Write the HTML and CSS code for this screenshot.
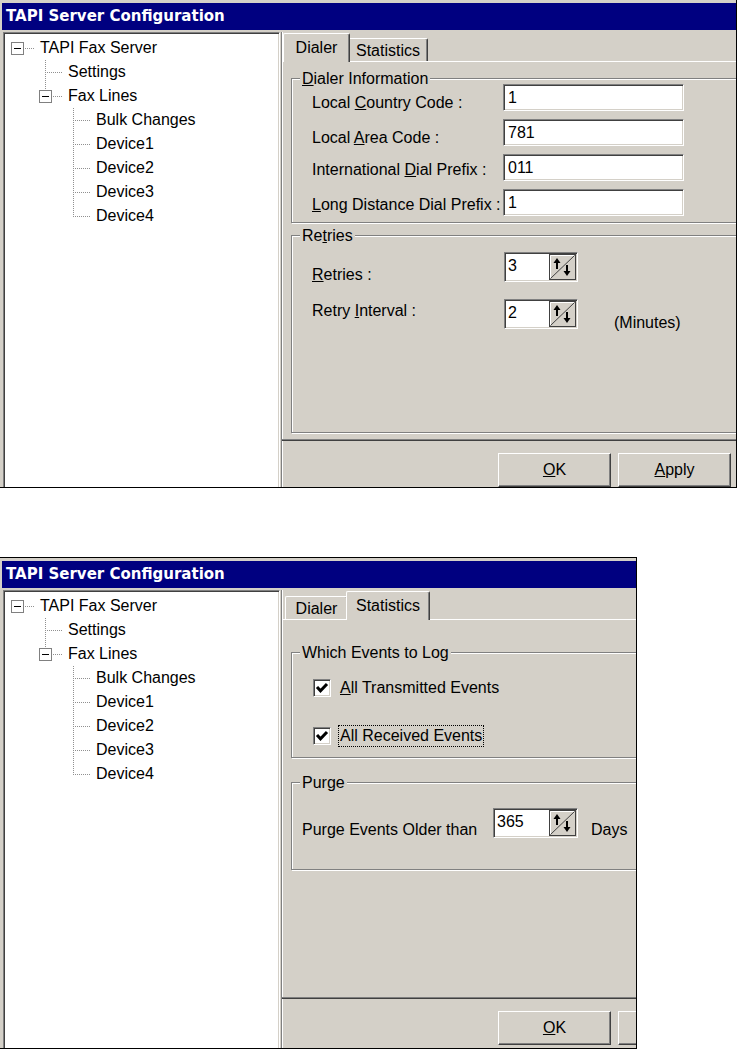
FILE: index.html
```html
<!DOCTYPE html>
<html lang="en">
<head>
    <meta charset="UTF-8">
    <meta name="viewport" content="width=device-width, initial-scale=1.0">
    <title>TAPI Server Configuration</title>

    <link rel="stylesheet" href="styles.css">
</head>
<body>

    <!-- Screenshot 1: Dialer tab -->
    <div class="shot shot-dialer">
        <div class="window">
            <div class="titlebar">TAPI Server Configuration</div>
            <div class="client">
                <ul class="tree">
                    <li class="node root"><span class="gutter"><span class="toggle"></span></span>TAPI Fax Server</li>
                    <li class="node lvl1"><span class="gutter"></span>Settings</li>
                    <li class="node lvl1 last"><span class="gutter"><span class="toggle"></span></span>Fax Lines</li>
                    <li class="node lvl2"><span class="gutter"></span>Bulk Changes</li>
                    <li class="node lvl2"><span class="gutter"></span>Device1</li>
                    <li class="node lvl2"><span class="gutter"></span>Device2</li>
                    <li class="node lvl2"><span class="gutter"></span>Device3</li>
                    <li class="node lvl2 last"><span class="gutter"></span>Device4</li>
                </ul>

                <div class="panel">
                    <div class="tabs">
                        <div class="tab tab-dialer active">Dialer</div>
                        <div class="tab tab-stats">Statistics</div>
                    </div>

                    <div class="page page-dialer">
                        <div class="group">
                            <div class="group-title"><u>D</u>ialer Information</div>
                            <div class="field-grid">
                                <label class="lbl-low">Local <u>C</u>ountry Code :</label>
                                <div class="edit">1</div>
                                <label class="lbl-low">Local <u>A</u>rea Code :</label>
                                <div class="edit">781</div>
                                <label>International <u>D</u>ial Prefix :</label>
                                <div class="edit">011</div>
                                <label><u>L</u>ong Distance Dial Prefix :</label>
                                <div class="edit">1</div>
                            </div>
                        </div>

                        <div class="group group-fill">
                            <div class="group-title">Re<u>t</u>ries</div>
                            <div class="spin-grid">
                                <label class="lbl-retries"><u>R</u>etries :</label>
                                <div class="spin spin-short">
                                    <span class="spin-value">3</span>
                                    <svg class="spin-btn" width="27" height="26" viewBox="0 0 27 26">
                                        <rect x="0.5" y="0.5" width="26" height="25" fill="#d4d0c8" stroke="#404040"/>
                                        <path d="M1.5 24V1.5H25" fill="none" stroke="#fff"/>
                                        <path d="M1.5 24.5L25.5 1.5" fill="none" stroke="#404040"/>
                                        <path d="M8 15V7" stroke="#000" stroke-width="2"/>
                                        <path d="M4.5 9L8 4L11.5 9Z" fill="#000"/>
                                        <path d="M18 11V19" stroke="#000" stroke-width="2"/>
                                        <path d="M14.5 17L18 22L21.5 17Z" fill="#000"/>
                                    </svg>
                                </div>
                                <span></span>

                                <label class="lbl-interval">Retry <u>I</u>nterval :</label>
                                <div class="spin spin-short">
                                    <span class="spin-value">2</span>
                                    <svg class="spin-btn" width="27" height="26" viewBox="0 0 27 26">
                                        <rect x="0.5" y="0.5" width="26" height="25" fill="#d4d0c8" stroke="#404040"/>
                                        <path d="M1.5 24V1.5H25" fill="none" stroke="#fff"/>
                                        <path d="M1.5 24.5L25.5 1.5" fill="none" stroke="#404040"/>
                                        <path d="M8 15V7" stroke="#000" stroke-width="2"/>
                                        <path d="M4.5 9L8 4L11.5 9Z" fill="#000"/>
                                        <path d="M18 11V19" stroke="#000" stroke-width="2"/>
                                        <path d="M14.5 17L18 22L21.5 17Z" fill="#000"/>
                                    </svg>
                                </div>
                                <span class="unit">(Minutes)</span>
                            </div>
                        </div>
                    </div>

                    <div class="buttons">
                        <button class="btn"><u>O</u>K</button>
                        <button class="btn"><u>A</u>pply</button>
                    </div>
                </div>
            </div>
        </div>
    </div>

    <!-- Screenshot 2: Statistics tab -->
    <div class="shot shot-stats">
        <div class="window">
            <div class="titlebar">TAPI Server Configuration</div>
            <div class="client">
                <ul class="tree">
                    <li class="node root"><span class="gutter"><span class="toggle"></span></span>TAPI Fax Server</li>
                    <li class="node lvl1"><span class="gutter"></span>Settings</li>
                    <li class="node lvl1 last"><span class="gutter"><span class="toggle"></span></span>Fax Lines</li>
                    <li class="node lvl2"><span class="gutter"></span>Bulk Changes</li>
                    <li class="node lvl2"><span class="gutter"></span>Device1</li>
                    <li class="node lvl2"><span class="gutter"></span>Device2</li>
                    <li class="node lvl2"><span class="gutter"></span>Device3</li>
                    <li class="node lvl2 last"><span class="gutter"></span>Device4</li>
                </ul>

                <div class="panel">
                    <div class="tabs">
                        <div class="tab tab-dialer">Dialer</div>
                        <div class="tab tab-stats active">Statistics</div>
                    </div>

                    <div class="page page-stats">
                        <div class="group">
                            <div class="group-title">Which Events to Log</div>
                            <div class="check-list">
                                <div class="check-row">
                                    <span class="checkbox">
                                        <svg width="14" height="14" viewBox="0 0 14 14"><path d="M2 6L5.5 9.8L12 3" fill="none" stroke="#000" stroke-width="3"/></svg>
                                    </span>
                                    <span class="check-label"><u>A</u>ll Transmitted Events</span>
                                </div>
                                <div class="check-row">
                                    <span class="checkbox">
                                        <svg width="14" height="14" viewBox="0 0 14 14"><path d="M2 6L5.5 9.8L12 3" fill="none" stroke="#000" stroke-width="3"/></svg>
                                    </span>
                                    <span class="check-label focused">All Received Events</span>
                                </div>
                            </div>
                        </div>

                        <div class="group group-purge">
                            <div class="group-title">Purge</div>
                            <div class="purge-row">
                                <span class="purge-label">Purge Events Older than</span>
                                <div class="spin spin-long">
                                    <span class="spin-value">365</span>
                                    <svg class="spin-btn" width="27" height="26" viewBox="0 0 27 26">
                                        <rect x="0.5" y="0.5" width="26" height="25" fill="#d4d0c8" stroke="#404040"/>
                                        <path d="M1.5 24V1.5H25" fill="none" stroke="#fff"/>
                                        <path d="M1.5 24.5L25.5 1.5" fill="none" stroke="#404040"/>
                                        <path d="M8 15V7" stroke="#000" stroke-width="2"/>
                                        <path d="M4.5 9L8 4L11.5 9Z" fill="#000"/>
                                        <path d="M18 11V19" stroke="#000" stroke-width="2"/>
                                        <path d="M14.5 17L18 22L21.5 17Z" fill="#000"/>
                                    </svg>
                                </div>
                                <span class="days">Days</span>
                            </div>
                        </div>
                    </div>

                    <!-- second button is cut off by the screenshot edge -->
                    <div class="buttons">
                        <button class="btn"><u>O</u>K</button>
                        <button class="btn" aria-label="Apply"></button>
                    </div>
                </div>
            </div>
        </div>
    </div>

</body>
</html>
```

FILE: styles.css
```css
/* Two cropped screenshots of the same Win2000-style dialog */
* {
    box-sizing: border-box;
}

body {
    margin: 0;
    background-color: #fff;
    font-family: "Liberation Sans", Arial, sans-serif;
    font-size: 16px;
    color: #000;
}

.shot {
    overflow: hidden;
    background-color: #d4d0c8;
    border: 1px solid #000;
    border-left: 0;
}

.shot-dialer {
    width: 737px;
    height: 489px;
    margin-top: -1px;
}

.shot-stats {
    width: 637px;
    height: 492px;
    margin-top: 69px;
}

.window {
    width: 800px;
    padding: 3px 0 0 2px;
}

.titlebar {
    height: 27px;
    padding-left: 4px;
    background-color: #000080;
    color: #fff;
    font-family: "DejaVu Sans", Verdana, sans-serif;
    font-weight: bold;
    font-size: 15px;
    line-height: 27px;
    white-space: nowrap;
}

.client {
    display: flex;
    height: 460px;
    margin-top: 2px;
}

/* Tree view */
.tree {
    flex: none;
    width: 277px;
    margin: 0 0 0 1px;
    padding: 3px 0 0 1px;
    list-style: none;
    background-color: #fff;
    border: 1px solid;
    border-color: #808080 #fff #fff #808080;
    box-shadow: inset 1px 1px #404040, inset -1px -1px #d4d0c8;
}

.node {
    display: flex;
    align-items: center;
    height: 24px;
    white-space: nowrap;
}

.lvl1 {
    padding-left: 28px;
}

.lvl2 {
    padding-left: 56px;
}

.gutter {
    flex: none;
    display: flex;
    align-items: center;
    width: 30px;
    height: 24px;
    margin-right: 5px;
    background:
        repeating-linear-gradient(to right, #909090 0 1px, transparent 1px 2px) 12px 12px / 18px 1px no-repeat,
        repeating-linear-gradient(to bottom, #909090 0 1px, transparent 1px 2px) 12px 0 / 1px 24px no-repeat;
}

.last .gutter {
    background-size: 18px 1px, 1px 12px;
}

.root .gutter {
    background-size: 18px 1px, 0 0;
}

.toggle {
    width: 13px;
    height: 13px;
    margin-left: 6px;
    border: 1px solid #808080;
    background: #fff linear-gradient(#000, #000) center / 7px 1px no-repeat;
}

/* Right side: tabs and buttons */
.panel {
    flex: 1;
    margin-left: 1px;
    border-left: 1px solid #808080;
    box-shadow: inset 1px 0 #fff;
}

.tabs {
    display: flex;
    align-items: flex-end;
    height: 29px;
    padding-left: 3px;
}

.tab {
    height: 23px;
    padding-top: 1px;
    border: 1px solid;
    border-color: #fff #404040 transparent #fff;
    border-bottom: 0;
    border-radius: 2px 2px 0 0;
    box-shadow: inset -1px 0 #808080;
    text-align: center;
    line-height: 22px;
    white-space: nowrap;
}

.tab-dialer {
    width: 63px;
}

.tab-stats {
    width: 80px;
}

.tab.active {
    position: relative;
    z-index: 1;
    height: 29px;
    margin: 0 -2px -1px;
    padding-top: 0;
    background-color: #d4d0c8;
    line-height: 28px;
}

.tab-dialer.active {
    width: 67px;
}

.tab-stats.active {
    width: 84px;
}

.page {
    display: flex;
    flex-direction: column;
    height: 380px;
    padding: 16px 0 7px;
    border-top: 1px solid #fff;
    border-bottom: 1px solid #404040;
    box-shadow: inset 0 -1px #808080;
}

.page-stats {
    padding-top: 32px;
}

.group {
    margin-left: 9px;
    border: 1px solid #808080;
    box-shadow: inset 1px 1px #fff, 1px 1px #fff;
}

.group-title {
    width: fit-content;
    margin: -9px 0 0 8px;
    padding: 0 2px;
    line-height: 17px;
    background-color: #d4d0c8;
    white-space: nowrap;
}

.group-fill {
    flex: 1;
    margin-top: 12px;
}

.field-grid {
    display: grid;
    grid-template-columns: 191px 181px;
    grid-auto-rows: 27px;
    row-gap: 8px;
    margin-top: -3px;
    padding: 0 0 6px 20px;
}

.field-grid label {
    padding-top: 5px;
    line-height: 22px;
    white-space: nowrap;
}

.field-grid .lbl-low {
    padding-top: 8px;
}

.edit {
    padding-left: 4px;
    background-color: #fff;
    border: 1px solid;
    border-color: #808080 #fff #fff #808080;
    box-shadow: inset 1px 1px #404040, inset -1px -1px #d4d0c8;
    line-height: 25px;
}

.spin-grid {
    display: grid;
    grid-template-columns: 192px auto 1fr;
    grid-auto-rows: 30px;
    row-gap: 17px;
    margin-top: 8px;
    padding-left: 20px;
}

.spin-grid label,
.unit {
    line-height: 18px;
    white-space: nowrap;
}

.lbl-retries {
    padding-top: 14px;
}

.lbl-interval {
    padding-top: 3px;
}

.unit {
    margin-left: 36px;
    padding-top: 15px;
}

.spin {
    display: flex;
    height: 30px;
    padding: 1px;
    border: 1px solid;
    border-color: #808080 #fff #fff #808080;
    box-shadow: inset 1px 1px #404040, inset -1px -1px #d4d0c8;
}

.spin-short {
    width: 74px;
}

.spin-long {
    width: 85px;
}

.spin-value {
    flex: 1;
    padding-left: 2px;
    background-color: #fff;
    line-height: 24px;
}

.spin-btn {
    display: block;
    flex: none;
}

/* Statistics tab */
.check-list {
    display: flex;
    flex-direction: column;
    gap: 26px;
    padding: 16px 0 10px 21px;
}

.check-row {
    display: flex;
    align-items: center;
    height: 22px;
}

.checkbox {
    display: flex;
    align-items: center;
    justify-content: center;
    width: 18px;
    height: 18px;
    margin-right: 7px;
    background-color: #fff;
    border: 1px solid;
    border-color: #808080 #fff #fff #808080;
    box-shadow: inset 1px 1px #404040, inset -1px -1px #d4d0c8;
}

.check-label {
    padding: 0 1px;
    border: 1px dotted transparent;
    line-height: 20px;
    white-space: nowrap;
}

.check-label.focused {
    border-color: #000;
}

.group-purge {
    margin-top: 24px;
}

.purge-row {
    display: flex;
    align-items: flex-start;
    padding: 17px 0 30px 10px;
}

.purge-label {
    width: 191px;
    padding-top: 13px;
    line-height: 18px;
    white-space: nowrap;
}

.days {
    margin-left: 13px;
    padding-top: 13px;
    line-height: 18px;
}

.buttons {
    display: flex;
    gap: 7px;
    padding: 12px 0 0 216px;
}

.btn {
    width: 113px;
    height: 34px;
    padding: 0;
    background-color: #d4d0c8;
    border: 1px solid;
    border-color: #fff #404040 #404040 #fff;
    box-shadow: inset -1px -1px #808080;
    font: inherit;
    line-height: 32px;
    color: #000;
}
```
